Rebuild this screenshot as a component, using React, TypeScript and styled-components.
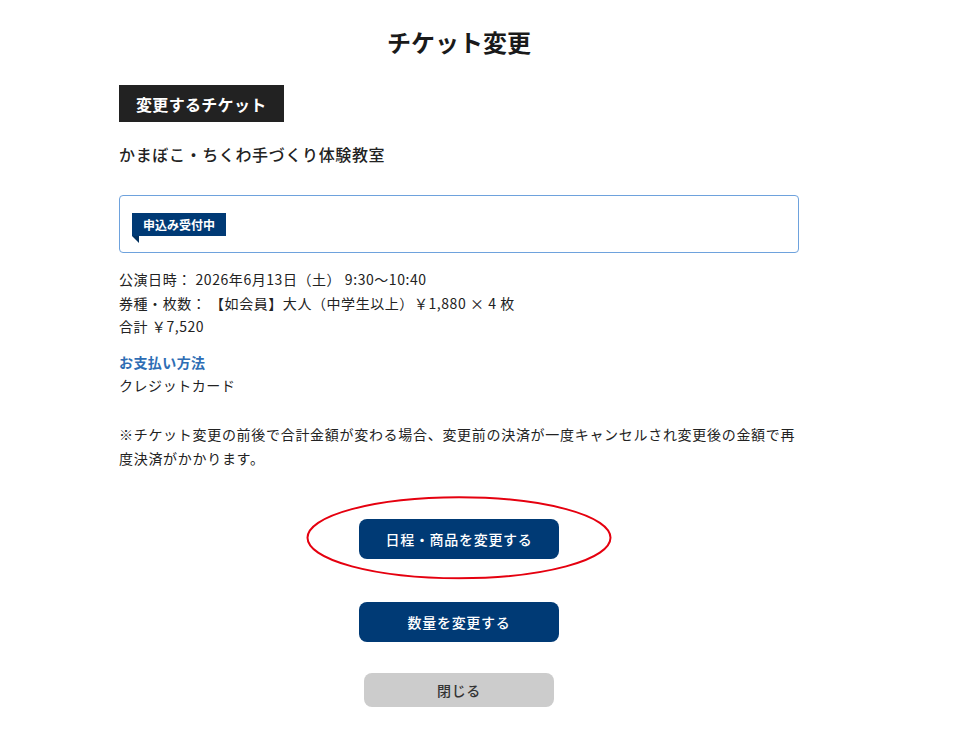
import { createGlobalStyle, styled } from 'styled-components';

const GlobalStyle = createGlobalStyle`
  body {
    margin: 0;
    background: #fff;
    color: #222;
    font-family: "Noto Sans CJK JP", "Noto Sans", sans-serif;
  }
`;

export default function App() {
  return (
    <>
      <GlobalStyle />
      <Page>
        <Title>チケット変更</Title>
        <SectionLabel>変更するチケット</SectionLabel>
        <EventName>かまぼこ・ちくわ手づくり体験教室</EventName>

        <StatusCard>
          <StatusBadge>申込み受付中</StatusBadge>
        </StatusCard>

        <Details>
          <Line>公演日時： 2026年6月13日（土） 9:30〜10:40</Line>
          <Line>券種・枚数： 【如会員】大人（中学生以上）￥1,880 × 4 枚</Line>
          <Line>合計 ￥7,520</Line>
        </Details>

        <Payment>
          <PaymentLabel>お支払い方法</PaymentLabel>
          <Line>クレジットカード</Line>
        </Payment>

        <Note>
          ※チケット変更の前後で合計金額が変わる場合、変更前の決済が一度キャンセルされ変更後の金額で再度決済がかかります。
        </Note>

        <Actions>
          <Highlight>
            <PrimaryButton>日程・商品を変更する</PrimaryButton>
            <Ring viewBox="0 0 306 84" aria-hidden>
              <ellipse cx="153" cy="42" rx="151.5" ry="40.5" fill="none" stroke="#e5000f" strokeWidth="2" />
            </Ring>
          </Highlight>
          <PrimaryButton $gap={43}>数量を変更する</PrimaryButton>
          <CloseButton>閉じる</CloseButton>
        </Actions>
      </Page>
    </>
  );
}

const Page = styled.main`
  width: 680px;
  margin-left: 119px;
  padding-top: 24px;
  padding-bottom: 22px;
  display: flex;
  flex-direction: column;
  align-items: flex-start;
`;

const Title = styled.h1`
  align-self: stretch;
  margin: 0;
  text-align: center;
  font-size: 24px;
  line-height: 36px;
  font-weight: 700;
  color: #1a1a1a;
`;

const SectionLabel = styled.h2`
  margin: 25px 0 0;
  height: 37px;
  padding: 0 17px;
  display: inline-flex;
  align-items: center;
  background: #222;
  color: #fff;
  font-size: 16px;
  font-weight: 700;
  letter-spacing: 0.02em;
`;

const EventName = styled.p`
  margin: 20px 0 0;
  font-size: 16px;
  line-height: 24px;
  font-weight: 500;
  letter-spacing: 0.04em;
`;

const StatusCard = styled.div`
  align-self: stretch;
  margin-top: 29px;
  padding: 15px 12px 16px;
  border: 1px solid #6ea2dd;
  border-radius: 4px;
`;

const StatusBadge = styled.span`
  position: relative;
  display: inline-flex;
  align-items: center;
  height: 23px;
  padding: 0 11px;
  background: #003a75;
  color: #fff;
  font-size: 12px;
  font-weight: 700;

  &::after {
    content: '';
    position: absolute;
    left: 0;
    top: 100%;
    border-top: 7px solid #00305f;
    border-left: 7px solid transparent;
  }
`;

const Details = styled.div`
  margin-top: 15px;
  display: flex;
  flex-direction: column;
`;

const Line = styled.p`
  margin: 0;
  font-size: 14px;
  line-height: 23.5px;
  letter-spacing: 0.04em;
`;

const Payment = styled.div`
  margin-top: 11px;
  display: flex;
  flex-direction: column;
`;

const PaymentLabel = styled.p`
  margin: 0;
  font-size: 14px;
  line-height: 24px;
  font-weight: 700;
  letter-spacing: 0.03em;
  color: #2e6db4;
`;

const Note = styled.p`
  margin: 25px 0 0;
  font-size: 14px;
  line-height: 24px;
  letter-spacing: 0.05em;
`;

const Actions = styled.div`
  align-self: stretch;
  margin-top: 49px;
  display: flex;
  flex-direction: column;
  align-items: center;
`;

const Highlight = styled.div`
  position: relative;
  display: flex;
`;

const Ring = styled.svg`
  position: absolute;
  left: 50%;
  top: 50%;
  width: 306px;
  height: 84px;
  transform: translate(-50%, -51.5%);
  pointer-events: none;
`;

const PrimaryButton = styled.button<{ $gap?: number }>`
  margin-top: ${({ $gap }) => $gap ?? 0}px;
  width: 200px;
  height: 40px;
  border: none;
  border-radius: 8px;
  background: #003a75;
  color: #fff;
  font-family: inherit;
  font-size: 14px;
  font-weight: 500;
  letter-spacing: 0.05em;
  cursor: pointer;
`;

const CloseButton = styled.button`
  margin-top: 31px;
  width: 190px;
  height: 34px;
  border: none;
  border-radius: 8px;
  background: #cccccc;
  color: #333;
  font-family: inherit;
  font-size: 14px;
  font-weight: 500;
  letter-spacing: 0.05em;
  cursor: pointer;
`;
